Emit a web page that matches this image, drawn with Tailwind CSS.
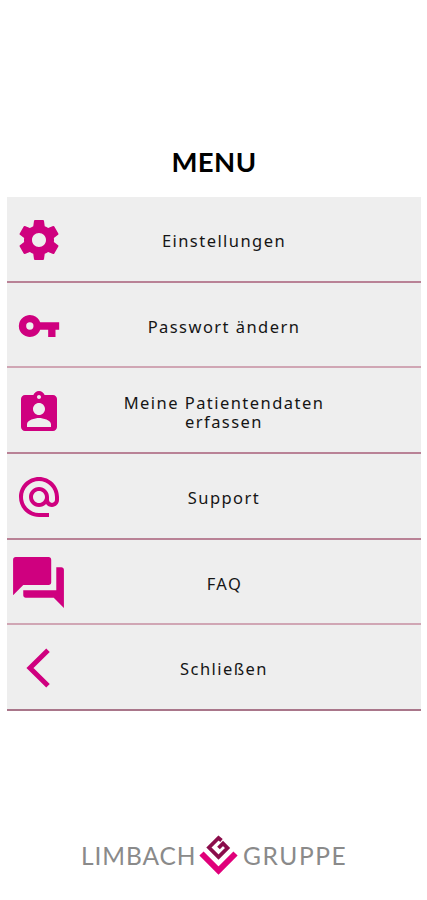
<!DOCTYPE html>
<html lang="de">

<head>
  <meta charset="UTF-8" />
  <meta name="viewport" content="width=device-width, initial-scale=1.0" />
  <title>Menu</title>
  <script src="https://cdn.jsdelivr.net/npm/@tailwindcss/browser@4"></script>
</head>

<body class="bg-white text-[#151515] font-['Noto_Sans',sans-serif]">
  <div class="flex flex-col h-[900px] overflow-hidden">
    <h1 class="mt-[142px] h-[55px] pl-px text-center leading-[40px] text-[27.5px] tracking-[0.4px] font-bold text-black font-['Lato',sans-serif]">MENU</h1>

    <!-- Menüeinträge -->
    <nav class="ml-[7px] mr-[6px] bg-[#eeeeee] text-[16.5px] leading-[19px] tracking-[1.45px] text-center">
      <a class="flex items-center h-[86px] border-b-2 border-[#b98296]">
        <span class="w-[63px] flex justify-center shrink-0 pt-[2px]">
          <svg class="size-12 shrink-0 fill-[#cf007f]" viewBox="0 0 24 24">
            <path d="M19.43 12.98c.04-.32.07-.64.07-.98s-.03-.66-.07-.98l2.11-1.65c.19-.15.24-.42.12-.64l-2-3.46c-.12-.22-.39-.3-.61-.22l-2.49 1c-.52-.4-1.08-.73-1.69-.98l-.38-2.65C14.46 2.18 14.25 2 14 2h-4c-.25 0-.46.18-.49.42l-.38 2.65c-.61.25-1.17.59-1.69.98l-2.49-1c-.23-.09-.49 0-.61.22l-2 3.46c-.13.22-.07.49.12.64l2.11 1.65c-.04.32-.07.65-.07.98s.03.66.07.98l-2.11 1.65c-.19.15-.24.42-.12.64l2 3.46c.12.22.39.3.61.22l2.49-1c.52.4 1.08.73 1.69.98l.38 2.65c.03.24.24.42.49.42h4c.25 0 .46-.18.49-.42l.38-2.65c.61-.25 1.17-.59 1.69-.98l2.49 1c.23.09.49 0 .61-.22l2-3.46c.12-.22.07-.49-.12-.64l-2.11-1.65zM12 15.5c-1.93 0-3.5-1.57-3.5-3.5s1.57-3.5 3.5-3.5 3.5 1.57 3.5 3.5-1.57 3.5-3.5 3.5z" />
          </svg>
        </span>
        <span class="w-[308px] pt-[2px]">Einstellungen</span>
      </a>
      <a class="flex items-center h-[85px] border-b-2 border-[#d0a6b4]">
        <span class="w-[63px] flex justify-center shrink-0 pt-[2px]">
          <svg class="size-11 shrink-0 fill-[#cf007f]" viewBox="0 0 24 24">
            <path d="M12.65 10A6 6 0 1 0 12.65 14H17v4h4v-4h2v-4H12.65zM7 14a2 2 0 1 1 0-4 2 2 0 0 1 0 4z" />
          </svg>
        </span>
        <span class="w-[308px] pt-[4px]">Passwort ändern</span>
      </a>
      <a class="flex items-center h-[86px] border-b-2 border-[#b98296]">
        <span class="w-[63px] flex justify-center shrink-0 pt-[6px]">
          <svg class="size-12 shrink-0 fill-[#cf007f]" viewBox="0 0 24 24">
            <path d="M19 3h-4.18C14.4 1.84 13.3 1 12 1s-2.4.84-2.82 2H5c-1.1 0-2 .9-2 2v14c0 1.1.9 2 2 2h14c1.1 0 2-.9 2-2V5c0-1.1-.9-2-2-2zm-7 0c.55 0 1 .45 1 1s-.45 1-1 1-1-.45-1-1 .45-1 1-1zm0 4c1.66 0 3 1.34 3 3s-1.34 3-3 3-3-1.34-3-3 1.34-3 3-3zm6 12H6v-1.4c0-2 4-3.1 6-3.1s6 1.1 6 3.1V19z" />
          </svg>
        </span>
        <span class="w-[308px] pt-[4px]">Meine Patientendaten<br />erfassen</span>
      </a>
      <a class="flex items-center h-[86px] border-b-2 border-[#b98296]">
        <span class="w-[63px] flex justify-center shrink-0 pt-px">
          <svg class="size-12 shrink-0 fill-[#cf007f]" viewBox="0 0 24 24">
            <path d="M12 2C6.48 2 2 6.48 2 12s4.48 10 10 10h5v-2h-5c-4.34 0-8-3.66-8-8s3.66-8 8-8 8 3.66 8 8v1.43c0 .79-.71 1.57-1.5 1.57s-1.5-.78-1.5-1.57V12c0-2.76-2.24-5-5-5s-5 2.24-5 5 2.24 5 5 5c1.38 0 2.64-.56 3.54-1.47.65.89 1.77 1.47 2.96 1.47 1.97 0 3.5-1.6 3.5-3.57V12c0-5.52-4.48-10-10-10zm0 13c-1.66 0-3-1.34-3-3s1.34-3 3-3 3 1.34 3 3-1.34 3-3 3z" />
          </svg>
        </span>
        <span class="w-[308px] pt-[2px]">Support</span>
      </a>
      <a class="flex items-center h-[85px] border-b-2 border-[#d0a6b4]">
        <span class="w-[63px] flex justify-center shrink-0 pt-px">
          <svg class="size-[61px] shrink-0 fill-[#cf007f]" viewBox="0 0 24 24">
            <path d="M21 6h-2v9H6v2c0 .55.45 1 1 1h11l4 4V7c0-.55-.45-1-1-1zm-4 6V3c0-.55-.45-1-1-1H3c-.55 0-1 .45-1 1v14l4-4h10c.55 0 1-.45 1-1z" />
          </svg>
        </span>
        <span class="w-[308px] pt-[3px] pl-px">FAQ</span>
      </a>
      <a class="flex items-center h-[86px] border-b-2 border-[#a9768a]">
        <span class="w-[62px] mr-px flex justify-center shrink-0 pt-px">
          <svg class="w-6 h-10 shrink-0" viewBox="0 0 24 40" fill="none" stroke="#cf007f" stroke-width="5">
            <path d="M22 2.3 4 20l18 17.7" />
          </svg>
        </span>
        <span class="w-[308px] pt-[2px]">Schließen</span>
      </a>
    </nav>

    <!-- Logo -->
    <footer class="mt-[124px] pl-[81px] flex items-center h-[42px] text-[24.5px] text-[#8a8a8a] font-['Lato',sans-serif] whitespace-nowrap">
      <span class="w-[118px] tracking-[0.9px]">LIMBACH</span>
      <svg class="w-10 h-[42px] shrink-0" viewBox="0 0 40 42" fill="none">
        <path d="M2.5 18.5 19.5 35.5 36.5 18.5" stroke="#e0007a" stroke-width="6" />
        <path d="M22.5 5.5 19.5 3 10 12.5 19.5 22 28.5 13 24 8.5 19.5 13" stroke="#8b0d4b" stroke-width="3.8" />
      </svg>
      <span class="pl-[4px] tracking-[1.6px]">GRUPPE</span>
    </footer>
  </div>
</body>

</html>
